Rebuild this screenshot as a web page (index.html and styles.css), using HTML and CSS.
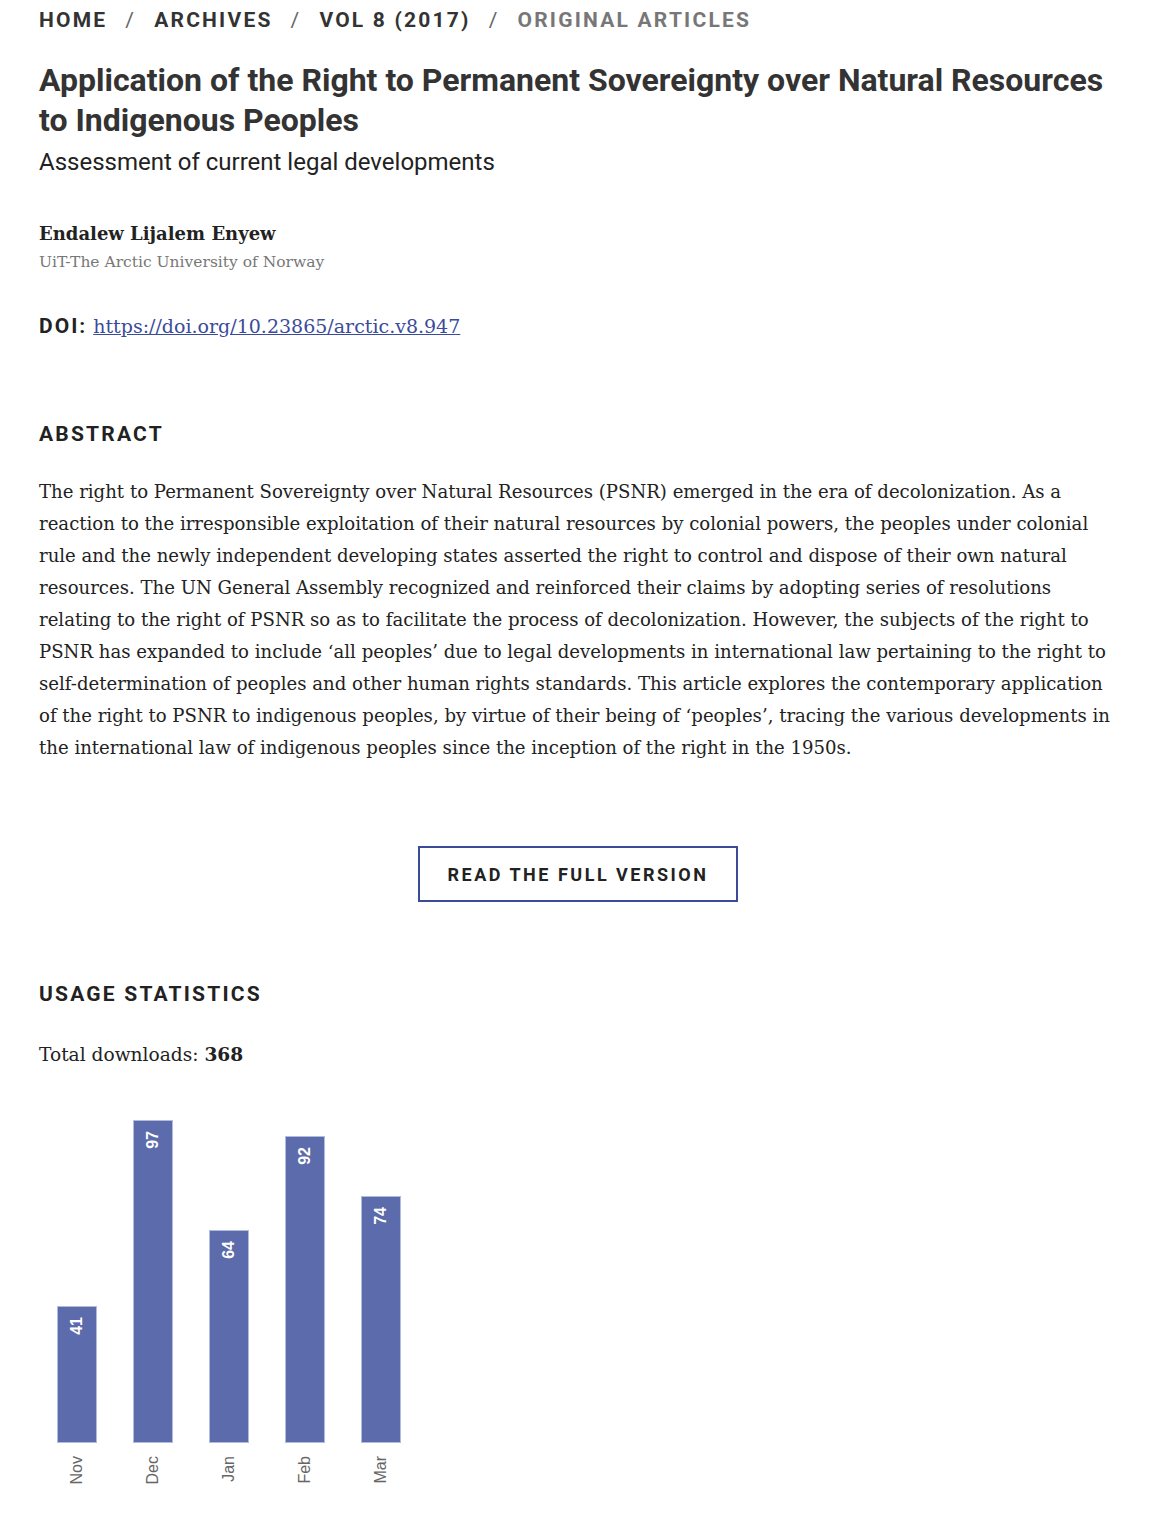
FILE: index.html
```html
<!DOCTYPE html>
<html lang="en">
<head>
<meta charset="utf-8">
<title>Application of the Right to Permanent Sovereignty over Natural Resources to Indigenous Peoples</title>
<link rel="stylesheet" href="styles.css">
</head>
<body>
<main class="page">
  <nav class="crumbs">
    <a class="crumb" href="#">Home</a><span class="sep">/</span>
    <a class="crumb" href="#">Archives</a><span class="sep">/</span>
    <a class="crumb" href="#">Vol 8 (2017)</a><span class="sep">/</span>
    <span class="crumb current">Original Articles</span>
  </nav>

  <h1 class="title">Application of the Right to Permanent Sovereignty over Natural Resources to Indigenous Peoples</h1>
  <h2 class="subtitle">Assessment of current legal developments</h2>

  <div class="author">
    <div class="author-name">Endalew Lijalem Enyew</div>
    <div class="author-aff">UiT-The Arctic University of Norway</div>
  </div>

  <div class="doi"><span class="doi-label">DOI:</span> <a href="#" class="doi-link">https://doi.org/10.23865/arctic.v8.947</a></div>

  <section class="abstract">
    <h3 class="label">Abstract</h3>
    <p class="abstract-text">The right to Permanent Sovereignty over Natural Resources (PSNR) emerged in the era of decolonization. As a reaction to the irresponsible exploitation of their natural resources by colonial powers, the peoples under colonial rule and the newly independent developing states asserted the right to control and dispose of their own natural resources. The UN General Assembly recognized and reinforced their claims by adopting series of resolutions relating to the right of PSNR so as to facilitate the process of decolonization. However, the subjects of the right to PSNR has expanded to include ‘all peoples’ due to legal developments in international law pertaining to the right to self-determination of peoples and other human rights standards. This article explores the contemporary application of the right to PSNR to indigenous peoples, by virtue of their being of ‘peoples’, tracing the various developments in the international law of indigenous peoples since the inception of the right in the 1950s.</p>
  </section>

  <div class="cta-row">
    <a class="cta" href="#">Read the full version</a>
  </div>

  <section class="stats">
    <h3 class="label">Usage Statistics</h3>
    <p class="total">Total downloads: <strong>368</strong></p>
    <div class="chart">
      <div class="col"><div class="plot"><div class="bar" style="height:137px"><span class="val">41</span></div></div><span class="month">Nov</span></div>
      <div class="col"><div class="plot"><div class="bar" style="height:323px"><span class="val">97</span></div></div><span class="month">Dec</span></div>
      <div class="col"><div class="plot"><div class="bar" style="height:213px"><span class="val">64</span></div></div><span class="month">Jan</span></div>
      <div class="col"><div class="plot"><div class="bar" style="height:307px"><span class="val">92</span></div></div><span class="month">Feb</span></div>
      <div class="col"><div class="plot"><div class="bar" style="height:247px"><span class="val">74</span></div></div><span class="month">Mar</span></div>
    </div>
  </section>
</main>
</body>
</html>
```

FILE: styles.css
```css
html, body {
  margin: 0;
  padding: 0;
  background: #fff;
}

body {
  color: #222;
  font-family: "DejaVu Serif", "Liberation Serif", serif;
}

.page {
  padding: 8px 34px 0 39px;
}

.crumbs {
  font-family: Roboto, "Liberation Sans", sans-serif;
  font-weight: 700;
  font-size: 21px;
  line-height: 24px;
  letter-spacing: 2.2px;
  text-transform: uppercase;
  color: #333;
  display: flex;
  align-items: baseline;
}

.crumb {
  color: #333;
  text-decoration: none;
}

.crumb.current {
  color: #777;
}

.sep {
  color: #666;
  font-weight: 400;
  margin: 0 18px 0 18px;
}

.title {
  margin: 28px 0 0;
  font-family: Roboto, "Liberation Sans", sans-serif;
  font-weight: 700;
  font-size: 32px;
  line-height: 40px;
  letter-spacing: 0;
  color: #333;
}

.subtitle {
  margin: 7px 0 0;
  font-family: Roboto, "Liberation Sans", sans-serif;
  font-weight: 400;
  font-size: 24px;
  line-height: 30px;
  color: #222;
}

.author {
  margin-top: 43px;
}

.author-name {
  font-weight: 700;
  font-size: 18px;
  line-height: 28px;
  color: #222;
}

.author-aff {
  margin-top: 2px;
  font-size: 15.5px;
  line-height: 24px;
  color: #777;
}

.doi {
  margin-top: 38px;
  font-size: 19px;
  line-height: 28px;
}

.doi-label {
  font-family: Roboto, "Liberation Sans", sans-serif;
  font-weight: 700;
  font-size: 21px;
  letter-spacing: 2px;
  color: #222;
}

.doi-link {
  color: #3a4b9a;
  text-decoration: underline;
}

.abstract {
  margin-top: 82px;
}

.label {
  margin: 0;
  font-family: Roboto, "Liberation Sans", sans-serif;
  font-weight: 700;
  font-size: 21px;
  line-height: 24px;
  letter-spacing: 2.2px;
  text-transform: uppercase;
  color: #222;
}

.abstract-text {
  margin: 30px 0 0;
  font-size: 18.1px;
  line-height: 32px;
  color: #222;
}

.cta-row {
  display: flex;
  justify-content: center;
  margin-top: 82px;
}

.cta {
  box-sizing: border-box;
  width: 320px;
  height: 56px;
  border: 2px solid #3a4b9a;
  display: flex;
  align-items: center;
  justify-content: center;
  font-family: Roboto, "Liberation Sans", sans-serif;
  font-weight: 700;
  font-size: 18px;
  letter-spacing: 2.5px;
  text-transform: uppercase;
  color: #222;
  text-decoration: none;
}

.stats {
  margin-top: 80px;
}

.total {
  margin: 35px 0 0;
  font-size: 18.6px;
  line-height: 28px;
  color: #222;
}

.total strong {
  font-weight: 700;
}

.chart {
  margin-top: 50px;
  padding-left: 18px;
  display: flex;
  align-items: flex-start;
  gap: 36px;
  padding-bottom: 30px;
}

.col {
  width: 40px;
  display: flex;
  flex-direction: column;
  align-items: center;
}

.plot {
  height: 324px;
  width: 40px;
  display: flex;
  align-items: flex-end;
}

.bar {
  box-sizing: border-box;
  width: 40px;
  background: #5c6bab;
  border: 1px solid #b3bbdc;
  display: flex;
  justify-content: center;
  align-items: flex-start;
}

.val {
  margin-top: 10px;
  writing-mode: vertical-rl;
  transform: rotate(180deg);
  font-family: "Liberation Sans", Arial, sans-serif;
  font-weight: 700;
  font-size: 16px;
  line-height: 18px;
  color: #fff;
}

.month {
  margin-top: 13px;
  writing-mode: vertical-rl;
  transform: rotate(180deg);
  font-family: "Liberation Sans", Arial, sans-serif;
  font-size: 16px;
  line-height: 18px;
  color: #666;
}
```
